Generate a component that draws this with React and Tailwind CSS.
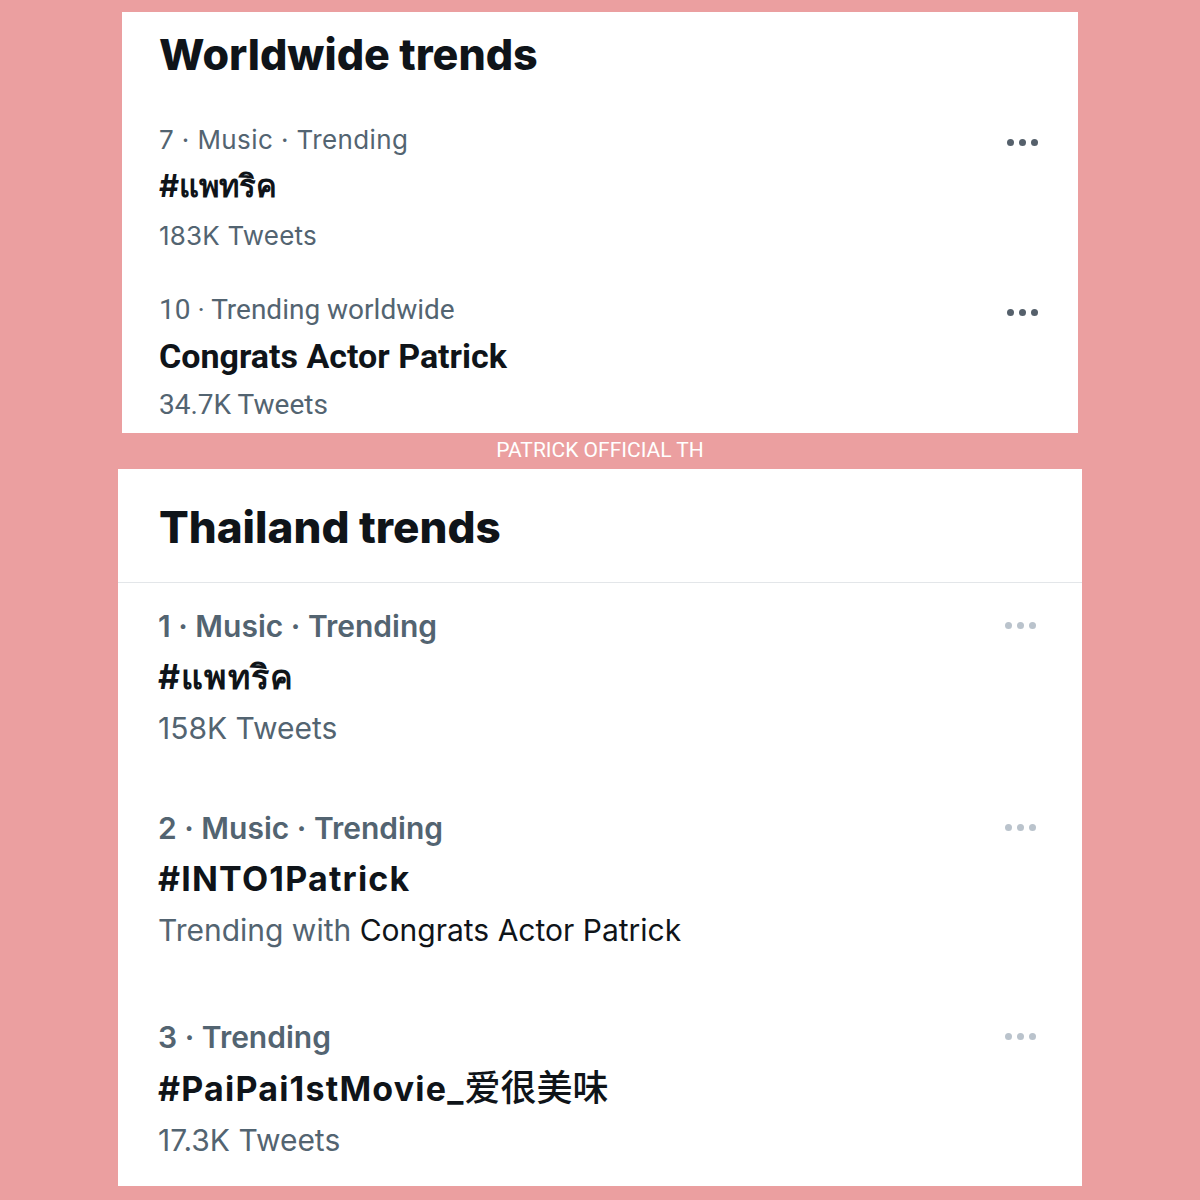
import { Fragment } from "react";

const font = { fontFamily: "Inter, 'Noto Sans', 'Noto Sans CJK SC', sans-serif" };
const narrow = { fontFamily: "Roboto, 'Noto Sans', sans-serif" };

const worldwide = [
  { meta: "7 · Music · Trending", title: "#แพทริค", sub: "183K Tweets", narrow: false },
  { meta: "10 · Trending worldwide", title: "Congrats Actor Patrick", sub: "34.7K Tweets", narrow: true },
];

const thailand = [
  { meta: "1 · Music · Trending", title: "#แพทริค", sub: "158K Tweets" },
  { meta: "2 · Music · Trending", title: "#INTO1Patrick", with: "Congrats Actor Patrick" },
  { meta: "3 · Trending", title: "#PaiPai1stMovie_", cjk: "爱很美味", sub: "17.3K Tweets" },
];

function Dots({ light }) {
  const dot = light ? "bg-[#bac3cc]" : "bg-[#55606b]";
  return (
    <div className="flex items-center gap-[5px]">
      <span className={`h-[7px] w-[7px] rounded-full ${dot}`} />
      <span className={`h-[7px] w-[7px] rounded-full ${dot}`} />
      <span className={`h-[7px] w-[7px] rounded-full ${dot}`} />
    </div>
  );
}

export default function App() {
  return (
    <div className="flex min-h-[1200px] w-[1200px] flex-col items-center bg-[#eb9fa0] pt-[12px]" style={font}>
      {/* Worldwide card */}
      <div className="w-[956px] bg-white pb-[2px] pl-[37px] pr-[40px] pt-[18px]">
        <h2 className="text-[43px] font-extrabold leading-[48px] text-[#0f1419]">
          Worldwide trends
        </h2>
        <div className="mt-[39px] flex flex-col gap-[24px]">
          {worldwide.map((t) => (
            <div key={t.meta} className="flex items-start justify-between" style={t.narrow ? narrow : undefined}>
              <div>
                <div
                  className={`leading-[46px] text-[#536471] ${t.narrow ? "text-[28px]" : "text-[26px] tracking-[0.4px]"}`}
                >
                  {t.meta}
                </div>
                <div className={`font-bold leading-[46px] text-[#0f1419] ${t.narrow ? "text-[34px]" : "text-[31px]"}`}>
                  {t.title}
                </div>
                <div className={`text-[#536471] ${t.narrow ? "text-[28px] leading-[52px]" : "text-[26px] leading-[54px] tracking-[0.2px]"}`}>
                  {t.sub}
                </div>
              </div>
              <div className="pt-[22px]">
                <Dots />
              </div>
            </div>
          ))}
        </div>
      </div>

      {/* watermark */}
      <div className="flex h-[36px] items-center justify-center text-[21px] text-white" style={narrow}>
        PATRICK OFFICIAL TH
      </div>

      {/* Thailand card */}
      <div className="w-[964px] bg-white pb-[21px]">
        <div className="border-b border-[#e3e6e9] pb-[30px] pl-[41px] pt-[33px]">
          <h2 className="text-[44px] font-extrabold leading-[50px] text-[#0f1419]">
            Thailand trends
          </h2>
        </div>
        <div className="pl-[40px] pr-[46px] pt-[18px]">
          {thailand.map((t, i) => (
            <Fragment key={t.meta}>
              <div className={`flex items-start justify-between ${i === 1 ? "mt-[50px]" : ""} ${i === 2 ? "mt-[57px]" : ""}`}>
                <div>
                  <div className="text-[30px] font-semibold leading-[50px] text-[#536471]">{t.meta}</div>
                  <div className="text-[34px] font-bold leading-[52px] tracking-[1.2px] text-[#0f1419]">
                    {t.title}
                    {t.cjk && <span className="text-[36px] font-medium tracking-[0px]">{t.cjk}</span>}
                  </div>
                  <div className="text-[30px] leading-[50px] text-[#536471]">
                    {t.with ? (
                      <>
                        Trending with <span className="text-[#0f1419]">{t.with}</span>
                      </>
                    ) : (
                      t.sub
                    )}
                  </div>
                </div>
                <div className="pt-[21px]">
                  <Dots light />
                </div>
              </div>
            </Fragment>
          ))}
        </div>
      </div>
    </div>
  );
}
